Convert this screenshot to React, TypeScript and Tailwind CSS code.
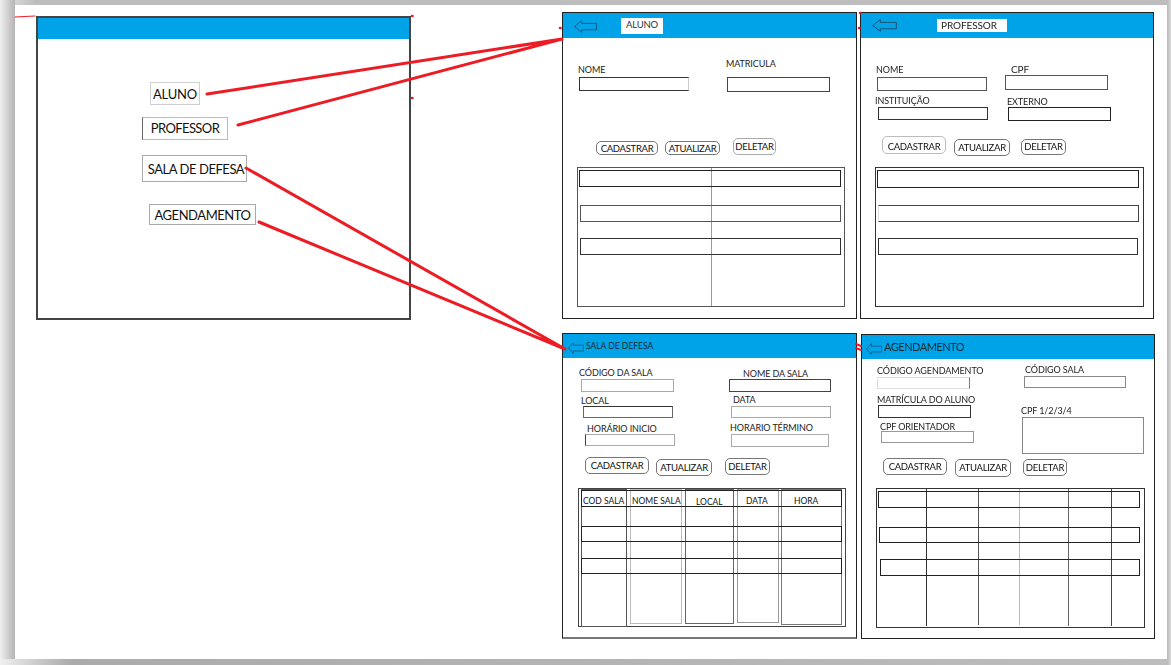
const BLUE = 'bg-[#00a2e8]';

const BackArrow = ({ className }: { className: string }) => (
    <svg viewBox="0 0 24 12" preserveAspectRatio="none" className={className} fill="none" stroke="#1c4a66" strokeWidth="0.8">
        <path d="M0.6 6 L8 0.6 V3.2 H23.4 V9 H8 V11.4 Z" />
    </svg>
);

// Grey button from the sketch, rounded corners and a slightly uneven line
const SketchButton = ({ label, className }: { label: string; className: string }) => (
    <div className={`box-border flex items-center justify-center rounded-[5px] border border-[#777] bg-white text-[9.5px] leading-none tracking-[-0.3px] text-[#111] ${className}`}>
        {label}
    </div>
);

const ActionRow = ({ cadastrar, atualizar, deletar, className }: { cadastrar: string; atualizar: string; deletar: string; className: string }) => (
    <div className={`flex items-start ${className}`}>
        <SketchButton label="CADASTRAR" className={cadastrar} />
        <SketchButton label="ATUALIZAR" className={atualizar} />
        <SketchButton label="DELETAR" className={deletar} />
    </div>
);

const Field = ({ label, labelClass, boxClass, className }: { label: string; labelClass?: string; boxClass: string; className?: string }) => (
    <div className={className}>
        <div className={`h-[12px] whitespace-nowrap text-[9px] leading-[14px] tracking-[-0.1px] text-[#1c1c1c] ${labelClass ?? ''}`}>{label}</div>
        <div className={`box-border border bg-white ${boxClass}`} />
    </div>
);

const Row = ({ className }: { className: string }) => (
    <div className={`relative z-10 box-border border border-[#222] ${className}`} />
);

const Screen = ({ className, headerClass, header, children }: { className: string; headerClass: string; header: React.ReactNode; children: React.ReactNode }) => (
    <div className={`absolute box-border border border-[#222] bg-white ${className}`}>
        <div className={`flex items-center ${BLUE} ${headerClass}`}>{header}</div>
        {children}
    </div>
);

export default function App() {
    return (
        <div className="relative h-[665px] w-[1171px] overflow-hidden bg-white font-['Lato','Open_Sans',sans-serif]">
            {/* moldura cinza do print */}
            <div className="absolute left-0 top-0 h-[5px] w-full bg-gradient-to-r from-[#e8e8e8] from-0% via-[#bdbdbd] via-[3%] to-[#bdbdbd]" />
            <div className="absolute left-0 top-0 h-full w-[15px] bg-gradient-to-r from-[#f0f0f0] to-[#b4b4b4]" />
            <div className="absolute bottom-0 left-0 h-[6px] w-full bg-gradient-to-r from-[#f0f0f0] via-[#ababab] via-[6%] to-[#bdbdbd]" />
            <div className="absolute right-0 top-0 h-full w-[4px] bg-gradient-to-r from-[#b8b8b8] to-[#dcdcdc]" />

            <div className="blur-[0.45px]">
                {/* tela inicial */}
                <div className="absolute left-[36px] top-[16px] box-border h-[304px] w-[375px] border-2 border-[#444] bg-white">
                    <div className={`h-[21px] ${BLUE}`} />
                    <div className="ml-[112px] mt-[43px] box-border flex h-[23px] w-[50px] items-center justify-center border border-[#d0d0d0] pt-[2px] text-[13px] tracking-[-0.2px] text-[#111]">ALUNO</div>
                    <div className="ml-[104px] mt-[12px] box-border flex h-[23px] w-[86px] items-center justify-center border border-[#bbb] border-l-[#666] text-[13px] tracking-[-0.6px] text-[#111]">PROFESSOR</div>
                    <div className="ml-[104px] mt-[15px] box-border flex h-[27px] w-[105px] items-center justify-center whitespace-nowrap border border-[#aaa] pl-[3px] pt-[2px] text-[13px] tracking-[-0.45px] text-[#111]">SALA DE DEFESA</div>
                    <div className="ml-[111px] mt-[22px] box-border flex h-[21px] w-[107px] items-center justify-center border border-[#aaa] pt-[2px] text-[13px] tracking-[-0.45px] text-[#111]">AGENDAMENTO</div>
                </div>

                {/* ALUNO */}
                <Screen
                    className="left-[562px] top-[12px] h-[307px] w-[295px]"
                    headerClass="h-[25px]"
                    header={
                        <>
                            <BackArrow className="ml-[11px] mt-[2px] h-[13px] w-[23px]" />
                            <div className="ml-[24px] flex h-[16px] w-[42px] items-center justify-center bg-white text-[9.5px] tracking-[-0.2px] text-[#333]">ALUNO</div>
                        </>
                    }
                >
                    <div className="flex h-[100px]">
                        <div className="w-[164px] pl-[16px]">
                            <Field className="mt-[25px]" label="NOME" labelClass="-ml-px mb-[2px]" boxClass="h-[14px] w-[110px] border-[#333] border-r-[#ccc]" />
                        </div>
                        <Field className="mt-[19px]" label="MATRICULA" labelClass="-ml-px mb-[8px]" boxClass="h-[15px] w-[103px] border-[#444]" />
                    </div>
                    <ActionRow
                        className="h-[29px] pl-[33px]"
                        cadastrar="mt-[3px] h-[14px] w-[62px] pt-px"
                        atualizar="ml-[7px] mt-[3px] h-[14px] w-[55px] pt-px"
                        deletar="ml-[13px] h-[17px] w-[43px] border-[#aaa]"
                    />
                    <div className="relative ml-[14px] box-border h-[140px] w-[268px] border border-[#555]">
                        <div className="absolute bottom-0 left-[133px] top-0 w-px bg-[#999]" />
                        <Row className="ml-px mt-[2px] h-[17px] w-[262px]" />
                        <Row className="ml-[2px] mt-[18px] h-[17px] w-[261px] border-[#555]" />
                        <Row className="ml-[2px] mt-[16px] h-[17px] w-[261px] border-[#333]" />
                    </div>
                </Screen>

                {/* PROFESSOR */}
                <Screen
                    className="left-[860px] top-[12px] h-[307px] w-[294px]"
                    headerClass="h-[25px]"
                    header={
                        <>
                            <BackArrow className="ml-[11px] h-[13px] w-[25px]" />
                            <div className="ml-[40px] flex h-[13px] w-[70px] items-center justify-center bg-white pr-[6px] text-[10px] tracking-[-0.1px] text-[#222]">PROFESSOR</div>
                        </>
                    }
                >
                    <div className="flex h-[98px]">
                        <div className="w-[144px] pl-[16px]">
                            <Field className="mt-[25px]" label="NOME" labelClass="-ml-px mb-[2px]" boxClass="h-[14px] w-[110px] border-[#555]" />
                            <Field className="mt-[3px]" label="INSTITUIÇÃO" labelClass="-ml-[2px] mb-[1px]" boxClass="ml-px h-[13px] w-[110px] border-[#333]" />
                        </div>
                        <div>
                            <Field className="mt-[24px]" label="CPF" labelClass="ml-[6px] mb-px text-[10px]" boxClass="h-[15px] w-[103px] border-[#555]" />
                            <Field className="mt-[5px]" label="EXTERNO" labelClass="ml-[2px]" boxClass="ml-[3px] h-[14px] w-[103px] border-[#222]" />
                        </div>
                    </div>
                    <ActionRow
                        className="h-[31px] pl-[21px]"
                        cadastrar="h-[18px] w-[64px] border-[#bbb] pt-[3px]"
                        atualizar="ml-[8px] mt-[3px] h-[17px] w-[56px]"
                        deletar="ml-[11px] mt-[3px] h-[16px] w-[45px]"
                    />
                    <div className="ml-[14px] box-border h-[140px] w-[269px] border border-[#333]">
                        <Row className="ml-px mt-[2px] h-[18px] w-[262px]" />
                        <Row className="ml-[2px] mt-[17px] h-[17px] w-[261px] border-[#444] border-l-[#ddd]" />
                        <Row className="ml-[2px] mt-[16px] h-[17px] w-[260px] border-[#333]" />
                    </div>
                </Screen>

                {/* SALA DE DEFESA */}
                <Screen
                    className="left-[562px] top-[333px] h-[306px] w-[295px] border-b-2 border-b-[#777]"
                    headerClass="h-[24px]"
                    header={
                        <>
                            <BackArrow className="ml-[5px] mt-[4px] h-[12px] w-[16px]" />
                            <div className="ml-[2px] whitespace-nowrap text-[8.5px] text-[#1a2a33]">SALA DE DEFESA</div>
                        </>
                    }
                >
                    <div className="flex h-[99px]">
                        <div className="w-[166px] pl-[18px]">
                            <Field className="mt-[8px]" label="CÓDIGO DA SALA" labelClass="-ml-[2px] mb-px" boxClass="h-[13px] w-[93px] border-[#aaa]" />
                            <Field className="mt-[2px]" label="LOCAL" boxClass="ml-[2px] h-[12px] w-[90px] border-[#666] border-t-[#333]" />
                            <Field className="mt-[4px]" label="HORÁRIO INICIO" labelClass="ml-[6px]" boxClass="ml-[4px] h-[12px] w-[90px] border-[#aaa] border-l-[#444]" />
                        </div>
                        <div>
                            <Field className="mt-[9px]" label="NOME DA SALA" labelClass="ml-[14px]" boxClass="h-[13px] w-[102px] border-[#444]" />
                            <Field className="mt-[1px]" label="DATA" labelClass="ml-[4px] mb-px" boxClass="ml-[2px] h-[12px] w-[100px] border-[#aaa]" />
                            <Field className="mt-[3px]" label="HORARIO TÉRMINO" labelClass="ml-px mb-px" boxClass="ml-[2px] h-[13px] w-[98px] border-[#aaa]" />
                        </div>
                    </div>
                    <ActionRow
                        className="h-[31px] pl-[22px]"
                        cadastrar="h-[17px] w-[64px]"
                        atualizar="ml-[7px] mt-[2px] h-[17px] w-[56px]"
                        deletar="ml-[13px] mt-[1px] h-[17px] w-[45px]"
                    />
                    <div className="relative ml-[15px] box-border h-[139px] w-[268px] border border-[#444]">
                        <div className="absolute inset-0 flex text-[8.5px] leading-none text-[#111]">
                            <div className="ml-[2px] box-border h-[138px] w-[46px] border border-[#555] pl-[1px] pt-[7px]">
                                <span className="whitespace-nowrap">COD SALA</span>
                            </div>
                            <div className="ml-[3px] box-border h-[135px] w-[52px] border border-[#bbb] pl-[1px] pt-[7px]">
                                <span className="whitespace-nowrap">NOME SALA</span>
                            </div>
                            <div className="ml-[3px] box-border h-[135px] w-[49px] border border-[#666] pl-[10px] pt-[8px]">LOCAL</div>
                            <div className="ml-[3px] box-border h-[134px] w-[42px] border border-[#999] pl-[8px] pt-[7px]">DATA</div>
                            <div className="ml-[2px] box-border h-[136px] w-[61px] border border-[#777] pl-[12px] pt-[7px]">HORA</div>
                        </div>
                        <Row className="ml-[2px] mt-[1px] h-[17px] w-[261px]" />
                        <Row className="ml-[2px] mt-[19px] h-[16px] w-[261px] border-[#111]" />
                        <Row className="ml-[2px] mt-[16px] h-[16px] w-[261px] border-[#111]" />
                    </div>
                </Screen>

                {/* AGENDAMENTO */}
                <Screen
                    className="left-[861px] top-[334px] h-[305px] w-[294px]"
                    headerClass="h-[24px]"
                    header={
                        <>
                            <BackArrow className="ml-[4px] mt-[3px] h-[12px] w-[16px]" />
                            <div className="ml-[2px] whitespace-nowrap text-[11px] tracking-[-0.5px] text-[#1a2a33]">AGENDAMENTO</div>
                        </>
                    }
                >
                    <div className="flex h-[98px]">
                        <div className="w-[162px] pl-[15px]">
                            <Field className="mt-[5px]" label="CÓDIGO AGENDAMENTO" labelClass="mb-px" boxClass="h-[12px] w-[93px] border-[#ddd] border-r-[#777]" />
                            <Field className="mt-[4px]" label="MATRÍCULA DO ALUNO" boxClass="ml-px h-[13px] w-[93px] border-[#333]" />
                            <Field className="mt-[2px]" label="CPF ORIENTADOR" labelClass="ml-[3px] -mb-px" boxClass="ml-[4px] h-[12px] w-[93px] border-[#999]" />
                        </div>
                        <div>
                            <Field className="mt-[4px]" label="CÓDIGO SALA" labelClass="ml-px mb-px" boxClass="h-[12px] w-[102px] border-[#888]" />
                            <Field className="-ml-[3px] mt-[16px]" label="CPF 1/2/3/4" labelClass="mb-px" boxClass="ml-px h-[37px] w-[122px] border-[#888]" />
                        </div>
                    </div>
                    <ActionRow
                        className="h-[31px] pl-[21px]"
                        cadastrar="mt-px h-[17px] w-[64px]"
                        atualizar="ml-[8px] mt-[2px] h-[18px] w-[56px]"
                        deletar="ml-[12px] mt-[2px] h-[17px] w-[44px]"
                    />
                    <div className="relative ml-[14px] box-border h-[140px] w-[269px] border border-[#333]">
                        <div className="absolute inset-0 flex">
                            <div className="ml-[2px] box-border h-[137px] w-[48px] border-r border-[#333]" />
                            <div className="box-border h-[136px] w-[52px] border-r border-[#555]" />
                            <div className="box-border h-[136px] w-[41px] border-r border-[#bbb]" />
                            <div className="box-border h-[137px] w-[49px] border-r border-[#666]" />
                            <div className="box-border h-[137px] w-[43px] border-r border-[#444]" />
                        </div>
                        <Row className="ml-px mt-[2px] h-[17px] w-[262px]" />
                        <Row className="ml-[2px] mt-[19px] h-[16px] w-[261px]" />
                        <Row className="ml-[3px] mt-[16px] h-[17px] w-[260px]" />
                    </div>
                </Screen>

                {/* setas vermelhas entre as telas */}
                <svg className="pointer-events-none absolute left-0 top-0 h-[665px] w-[1171px]" viewBox="0 0 1171 665" fill="none" stroke="#ed1c24" strokeLinecap="round">
                    <path d="M15 17 L35 16" strokeWidth="1" />
                    <path d="M207 94 L562 39 M238 125 L562 39 M246 168 L565 349 M259 222 L565 349" strokeWidth="3" />
                    <path d="M856 344 L861 346 M856 348 L861 350" strokeWidth="2" />
                    <path d="M412 16 h0.5 M412 98 h0.5 M560 28 h0.5 M859 28 h0.5 M860 13 h0.5" strokeWidth="2.5" />
                </svg>
            </div>
        </div>
    );
}
